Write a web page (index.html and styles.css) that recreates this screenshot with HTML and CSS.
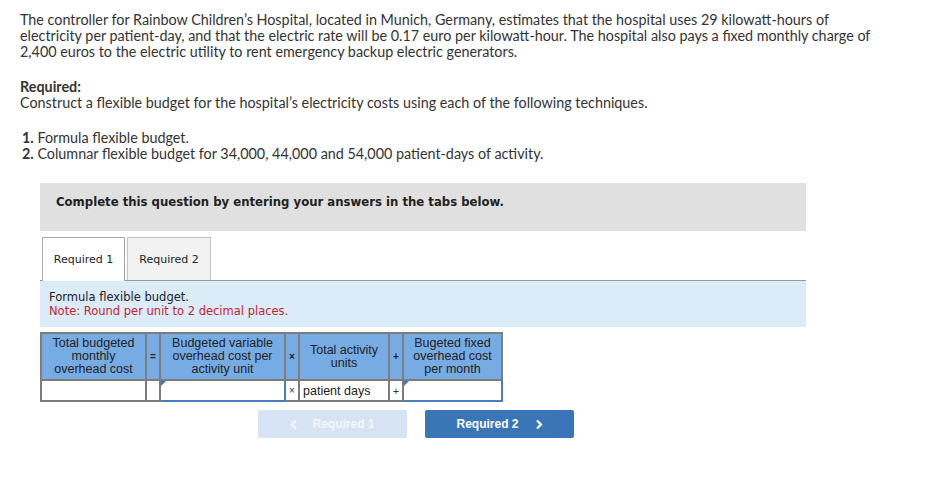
FILE: index.html
```html
<!DOCTYPE html>
<html>
<head>
<meta charset="utf-8">
<link rel="stylesheet" href="styles.css">
</head>
<body>
<div class="page">
  <p class="intro">The controller for Rainbow Children’s Hospital, located in Munich, Germany, estimates that the hospital uses 29 kilowatt-hours of electricity per patient-day, and that the electric rate will be 0.17 euro per kilowatt-hour. The hospital also pays a fixed monthly charge of 2,400 euros to the electric utility to rent emergency backup electric generators.</p>
  <p class="req"><b>Required:</b><br>Construct a flexible budget for the hospital’s electricity costs using each of the following techniques.</p>
  <ol class="steps">
    <li><b>1.</b> Formula flexible budget.</li>
    <li><b>2.</b> Columnar flexible budget for 34,000, 44,000 and 54,000 patient-days of activity.</li>
  </ol>
  <div class="panel">
    <div class="banner">Complete this question by entering your answers in the tabs below.</div>
    <div class="tabs">
      <div class="tab active">Required 1</div>
      <div class="tab">Required 2</div>
    </div>
    <div class="info">
      <div>Formula flexible budget.</div>
      <div class="note">Note: Round per unit to 2 decimal places.</div>
    </div>
    <table class="formula">
      <tr class="head">
        <th class="c1">Total budgeted monthly overhead cost</th>
        <th class="op">=</th>
        <th class="c3">Budgeted variable overhead cost per activity unit</th>
        <th class="op">×</th>
        <th class="c5">Total activity units</th>
        <th class="op">+</th>
        <th class="c7">Bugeted fixed overhead cost per month</th>
      </tr>
      <tr class="row">
        <td></td>
        <td></td>
        <td class="inp"><span class="flag"></span></td>
        <td class="op small">×</td>
        <td class="txt">patient days</td>
        <td class="op">+</td>
        <td class="inp"><span class="flag"></span></td>
      </tr>
    </table>
    <div class="nav">
      <button class="btn prev"><svg class="chev" width="8" height="11" viewBox="0 0 8 11"><path d="M6 1.5 L2 5.5 L6 9.5" fill="none" stroke="currentColor" stroke-width="2.2"/></svg>Required 1</button>
      <button class="btn next">Required 2<svg class="chev" width="8" height="11" viewBox="0 0 8 11"><path d="M2 1.5 L6 5.5 L2 9.5" fill="none" stroke="currentColor" stroke-width="2.2"/></svg></button>
    </div>
  </div>
</div>
</body>
</html>
```

FILE: styles.css
```css
* { box-sizing: border-box; }
html, body { margin: 0; padding: 0; background: #fff; }
body { font-family: "Lato", "Open Sans", sans-serif; color: #333; }
.page { padding: 12px 20px 0 20px; width: 944px; }
.intro { margin: 0; font-size: 14.35px; line-height: 16px; width: 858px; }
.req { margin: 19px 0 0; font-size: 14.35px; line-height: 16px; }
.req b { font-weight: 700; }
.steps { list-style: none; margin: 19px 0 0; padding: 0 0 0 2px; font-size: 14.35px; line-height: 16px; }
.steps b { font-weight: 700; }
.panel { margin: 21px 0 0 20px; width: 766px; }
.banner { background: #e0e0e0; height: 48px; padding: 12px 16px 0; font-family: "DejaVu Sans", Verdana, sans-serif; font-weight: 700; font-size: 11.7px; line-height: 14px; color: #222; }
.tabs { display: flex; gap: 2px; margin-top: 6px; padding-left: 2px; border-bottom: 1px solid #999; height: 44px; }
.tab { width: 84px; height: 43px; border: 1px solid #c4c4c4; border-bottom: none; background: #f2f2f2; display: flex; align-items: center; justify-content: center; font-family: "DejaVu Sans", Verdana, sans-serif; font-size: 11px; color: #222; }
.tab.active { background: #fff; border-color: #a9a9a9; height: 44px; margin-bottom: -1px; width: 83px; }
.info { background: #dbebf8; height: 46px; padding: 9px 9px 0; font-family: "DejaVu Sans", Verdana, sans-serif; font-size: 11.5px; line-height: 14px; color: #222; }
.info .note { color: #c0262d; }
.formula { border-collapse: collapse; margin-top: 5px; font-family: "Liberation Sans", Arial, sans-serif; font-size: 12.5px; }
.formula th, .formula td { border: 2px solid #7c7c7c; padding: 0; }
.formula th { background: #77abe3; color: #222; font-weight: normal; line-height: 13px; height: 47px; text-align: center; padding: 0 6px; }
.formula .c1 { width: 105px; }
.formula th.op, .formula .op { width: 14px; font-size: 11px; text-align: center; padding: 0; }
.formula th.op { font-weight: 700; font-size: 10px; }
.formula .c3 { width: 125px; }
.formula .c5 { width: 90px; }
.formula .c7 { width: 99px; padding: 0 4px; }
.formula .row td { height: 21px; background: #fff; }
.formula td.small { font-size: 10px; color: #333; }
.formula td.txt { padding-left: 3px; color: #222; }
.formula td.inp { position: relative; border: 2px solid #4a7dbd; }
.flag { position: absolute; left: 0; top: 0; width: 0; height: 0; border-top: 5px solid #3b74c0; border-right: 5px solid transparent; }
.nav { display: flex; gap: 18px; margin: 8px 0 0 218px; }
.btn { width: 149px; height: 28px; border: none; border-radius: 2px; font-family: "Liberation Sans", Arial, sans-serif; font-weight: 700; font-size: 12px; color: #fff; display: flex; align-items: center; justify-content: center; padding: 0; }
.btn.prev { background: #d6e3f2; color: #f4f8fc; }
.btn.prev .chev { margin-right: 14px; }
.btn.next { background: #3a75b8; }
.btn.next .chev { margin-left: 16px; }
```
